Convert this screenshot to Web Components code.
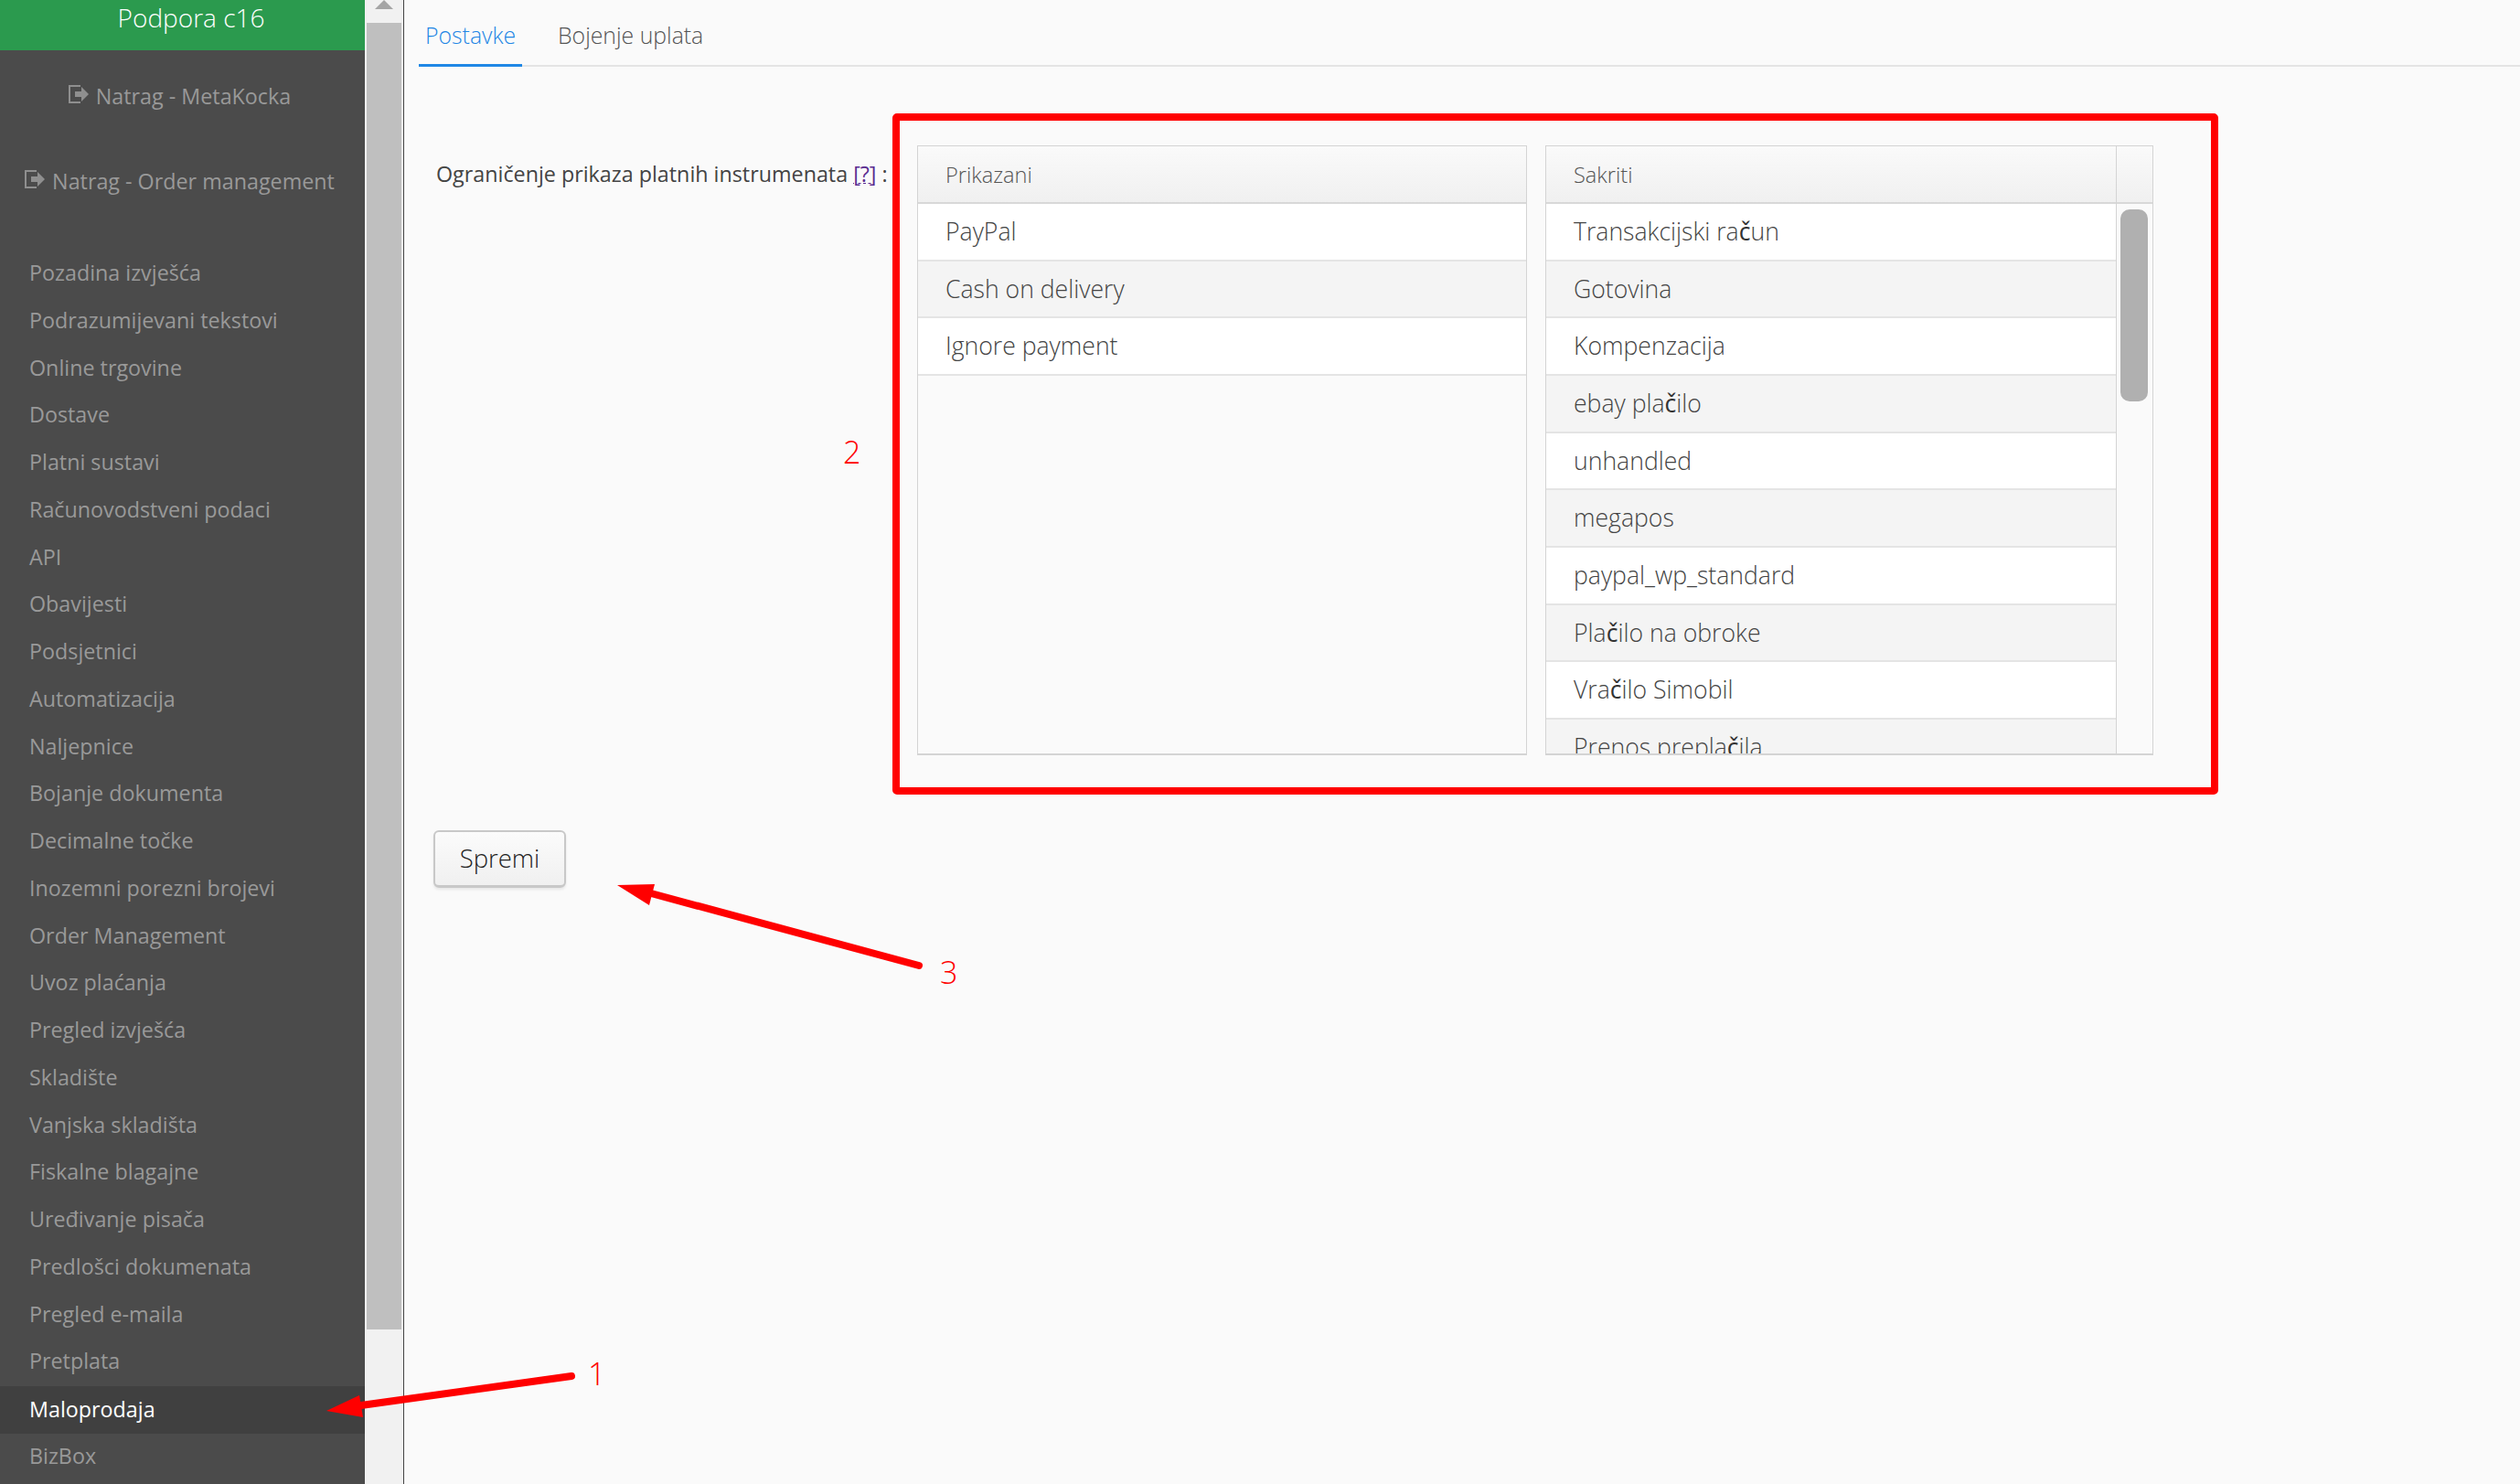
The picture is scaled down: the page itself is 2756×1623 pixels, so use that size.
<!DOCTYPE html>
<html lang="hr"><head><meta charset="utf-8"><title>Postavke</title>
<style>
html,body{margin:0;padding:0;height:100%;overflow:hidden;background:#fafafa}
body{font-family:"Open Sans","Noto Sans",sans-serif;color:#444}
</style></head><body>
<app-shell>
  <side-nav slot="nav">
    <nav-item slot="links" kind="back" label="Natrag - MetaKocka"></nav-item>
    <nav-item slot="links" kind="back" label="Natrag - Order management"></nav-item>
    <nav-item label="Pozadina izvješća"></nav-item>
    <nav-item label="Podrazumijevani tekstovi"></nav-item>
    <nav-item label="Online trgovine"></nav-item>
    <nav-item label="Dostave"></nav-item>
    <nav-item label="Platni sustavi"></nav-item>
    <nav-item label="Računovodstveni podaci"></nav-item>
    <nav-item label="API"></nav-item>
    <nav-item label="Obavijesti"></nav-item>
    <nav-item label="Podsjetnici"></nav-item>
    <nav-item label="Automatizacija"></nav-item>
    <nav-item label="Naljepnice"></nav-item>
    <nav-item label="Bojanje dokumenta"></nav-item>
    <nav-item label="Decimalne točke"></nav-item>
    <nav-item label="Inozemni porezni brojevi"></nav-item>
    <nav-item label="Order Management"></nav-item>
    <nav-item label="Uvoz plaćanja"></nav-item>
    <nav-item label="Pregled izvješća"></nav-item>
    <nav-item label="Skladište"></nav-item>
    <nav-item label="Vanjska skladišta"></nav-item>
    <nav-item label="Fiskalne blagajne"></nav-item>
    <nav-item label="Uređivanje pisača"></nav-item>
    <nav-item label="Predlošci dokumenata"></nav-item>
    <nav-item label="Pregled e-maila"></nav-item>
    <nav-item label="Pretplata"></nav-item>
    <nav-item label="Maloprodaja" active></nav-item>
    <nav-item label="BizBox"></nav-item>
  </side-nav>
  <page-scrollbar slot="bar"></page-scrollbar>
  <tab-bar>
    <tab-item active>Postavke</tab-item>
    <tab-item>Bojenje uplata</tab-item>
  </tab-bar>
  <settings-form>
    <span slot="label">Ograničenje prikaza platnih instrumenata <help-link>[?]</help-link> :</span>
    <pick-list slot="shown" title="Prikazani" items="PayPal|Cash on delivery|Ignore payment"></pick-list>
    <pick-list slot="hidden" title="Sakriti" scroll items="Transakcijski raČun|Gotovina|Kompenzacija|ebay plaČilo|unhandled|megapos|paypal_wp_standard|PlaČilo na obroke|VraČilo Simobil|Prenos preplaČila"></pick-list>
    <save-button slot="save">Spremi</save-button>
  </settings-form>
  <anno-layer slot="anno"></anno-layer>
</app-shell>
<script>
const def=(name,html)=>{customElements.define(name,class extends HTMLElement{
  connectedCallback(){ if(this.shadowRoot)return; const r=this.attachShadow({mode:'open'}); r.innerHTML=typeof html==='function'?html(this):html; }
});};
def('app-shell',`<style>
:host{display:flex;position:relative;width:100%;height:100vh;overflow:hidden;background:#fafafa}
.main{flex:1;min-width:0;border-left:1px solid #444;display:flex;flex-direction:column}
</style><slot name="nav"></slot><slot name="bar"></slot><div class="main"><slot></slot></div><slot name="anno"></slot>`);
def('side-nav',`<style>
:host{display:block;flex:0 0 399px;width:399px;height:100%;background:#4b4b4b;overflow:hidden}
header{height:55px;background:#2b9a4e;color:#fff;font-size:28px;line-height:39px;text-align:center;font-weight:300;padding-left:19px;box-sizing:border-box}
.links{display:flex;flex-direction:column;padding:25px 7px 0 0;gap:43px;margin-bottom:51px}
.items{display:flex;flex-direction:column}
</style><header>Podpora c16</header><div class="links"><slot name="links"></slot></div><div class="items"><slot></slot></div>`);
def('nav-item',h=>{const back=h.getAttribute('kind')==='back',act=h.hasAttribute('active');return `<style>
:host{display:block}
.i{height:51.75px;line-height:49.5px;padding-left:32px;font-size:23.3px;color:#999;white-space:nowrap}
.i.a{background:#404040;color:#fff;font-weight:500;line-height:50px}
.b{height:50px;line-height:50px;padding:0;display:flex;justify-content:center;align-items:center;gap:7px;color:#999}
svg{display:block;flex:none;margin-top:-4px}
</style>${back?`<div class="i b"><svg width="24" height="22" viewBox="0 0 24 22" fill="#8f8f8f"><path d="M1 1h13v2H3v16h11v2H1z"/><path d="M8 8h7V3l8 8-8 8v-5H8z"/></svg><span>${h.getAttribute('label')}</span></div>`:`<div class="i ${act?'a':''}">${h.getAttribute('label')}</div>`}`});
def('page-scrollbar',`<style>
:host{display:flex;flex-direction:column;align-items:center;flex:0 0 42px;width:42px;height:100%;background:#f1f1f1;box-sizing:border-box}
.up{height:25px;flex:none;width:100%;display:flex;justify-content:center}
.t{width:38px;height:1429px;background:#bfbfbf}
svg{display:block}
</style><div class="up"><svg width="22" height="11" viewBox="0 0 22 11"><path d="M11 0l10 10H1z" fill="#a5a5a5"/></svg></div><div class="t"></div>`);
def('tab-bar',`<style>
:host{display:flex;height:73px;box-sizing:border-box;margin-left:16px;border-bottom:2px solid #e4e4e4;flex:none}
</style><slot></slot>`);
def('tab-item',h=>`<style>
:host{display:block;height:73px;box-sizing:border-box;padding:0 7px;margin-right:25px;line-height:77px;font-size:24.8px;font-weight:300;color:${h.hasAttribute('active')?'#1f87e5':'#555'};${h.hasAttribute('active')?'border-bottom:3px solid #1f87e5;margin-right:32px;':''}}
</style><slot></slot>`);
def('settings-form',`<style>
:host{display:block;padding:86px 0 0 32px}
.row{display:flex;align-items:flex-start}
.l{width:529px;flex:none;height:63px;line-height:63px;font-size:23.3px;color:#444;white-space:nowrap;padding-left:3px;box-sizing:border-box}
.s{margin-top:82px}
.g{width:20px;flex:none}
</style><div class="row"><div class="l"><slot name="label"></slot></div><slot name="shown"></slot><div class="g"></div><slot name="hidden"></slot></div><div class="s"><slot name="save"></slot></div>`);
def('help-link',`<style>:host{color:#5a2d91;text-decoration:underline dashed 1px}</style><slot></slot>`);
def('pick-list',h=>{const sc=h.hasAttribute('scroll');const items=h.getAttribute('items').split('|');
const fmt=s=>s.replace(/Č/g,'<b>č</b>');
return `<style>
:host{display:block;flex:none;width:${sc?665:667}px;height:667px;box-sizing:border-box;border:1px solid #d4d4d4;border-bottom-width:2px;background:#fafafa;overflow:hidden;position:relative}
.grid{display:grid;grid-template-columns:${sc?'1fr 39px':'1fr'};height:100%}
.col{min-width:0;${sc?'border-right:1px solid #d4d4d4':''};overflow:hidden}
.head{height:63px;box-sizing:border-box;border-bottom:2px solid #d8d8d8;background:linear-gradient(#fafafa,#f0f0f0);padding-left:30px;line-height:62px;font-size:23.6px;font-weight:300;color:#555}
.row{height:62.67px;box-sizing:border-box;border-bottom:2px solid #e4e4e4;padding-left:30px;line-height:60px;font-size:26.6px;font-weight:300;color:#444;background:#fff;white-space:nowrap}
.row:nth-child(even){background:#f4f4f4}
b{font-weight:400;color:#333}
.sb{display:flex;flex-direction:column}
.sbh{height:63px;box-sizing:border-box;border-bottom:2px solid #d8d8d8;background:linear-gradient(#fafafa,#f0f0f0)}
.th{width:30px;height:210px;background:#b0b0b0;border-radius:10px;margin:6px 0 0 4px}
</style><div class="grid"><div class="col"><div class="head">${h.getAttribute('title')}</div><div class="rows">${items.map(i=>`<div class="row">${fmt(i)}</div>`).join('')}</div></div>${sc?'<div class="sb"><div class="sbh"></div><div class="th"></div></div>':''}</div>`});
def('save-button',`<style>
:host{display:inline-block;width:145px;height:63px;box-sizing:border-box;border:2px solid #c8c8c8;border-bottom-width:3px;border-radius:6px;background:linear-gradient(#fbfbfb,#f0f0f0);text-align:center;line-height:57px;font-size:27.5px;font-weight:300;color:#222;box-shadow:0 2px 3px rgba(0,0,0,.08)}
</style><slot></slot>`);
def('anno-layer',`<style>
:host{position:absolute;inset:0;pointer-events:none;display:block}
svg{position:absolute;left:0;top:0}
span{position:absolute;color:#f00;font-size:34px;line-height:34px;font-weight:350}
</style>
<svg width="2756" height="1623" viewBox="0 0 2756 1623">
<rect x="980" y="128" width="1442" height="737" fill="none" stroke="#f00" stroke-width="8" rx="1"/>
<path d="M625 1505L395 1537" stroke="#f00" stroke-width="8" stroke-linecap="round"/>
<path d="M357 1543L393 1526L397 1550z" fill="#f00"/>
<path d="M1005 1056L712 977" stroke="#f00" stroke-width="8" stroke-linecap="round"/>
<path d="M675 968L716 967L710 990z" fill="#f00"/>
</svg>
<span style="left:643px;top:1485px">1</span><span style="left:922px;top:477px">2</span><span style="left:1028px;top:1046px">3</span>`);
</script>
</body></html>
